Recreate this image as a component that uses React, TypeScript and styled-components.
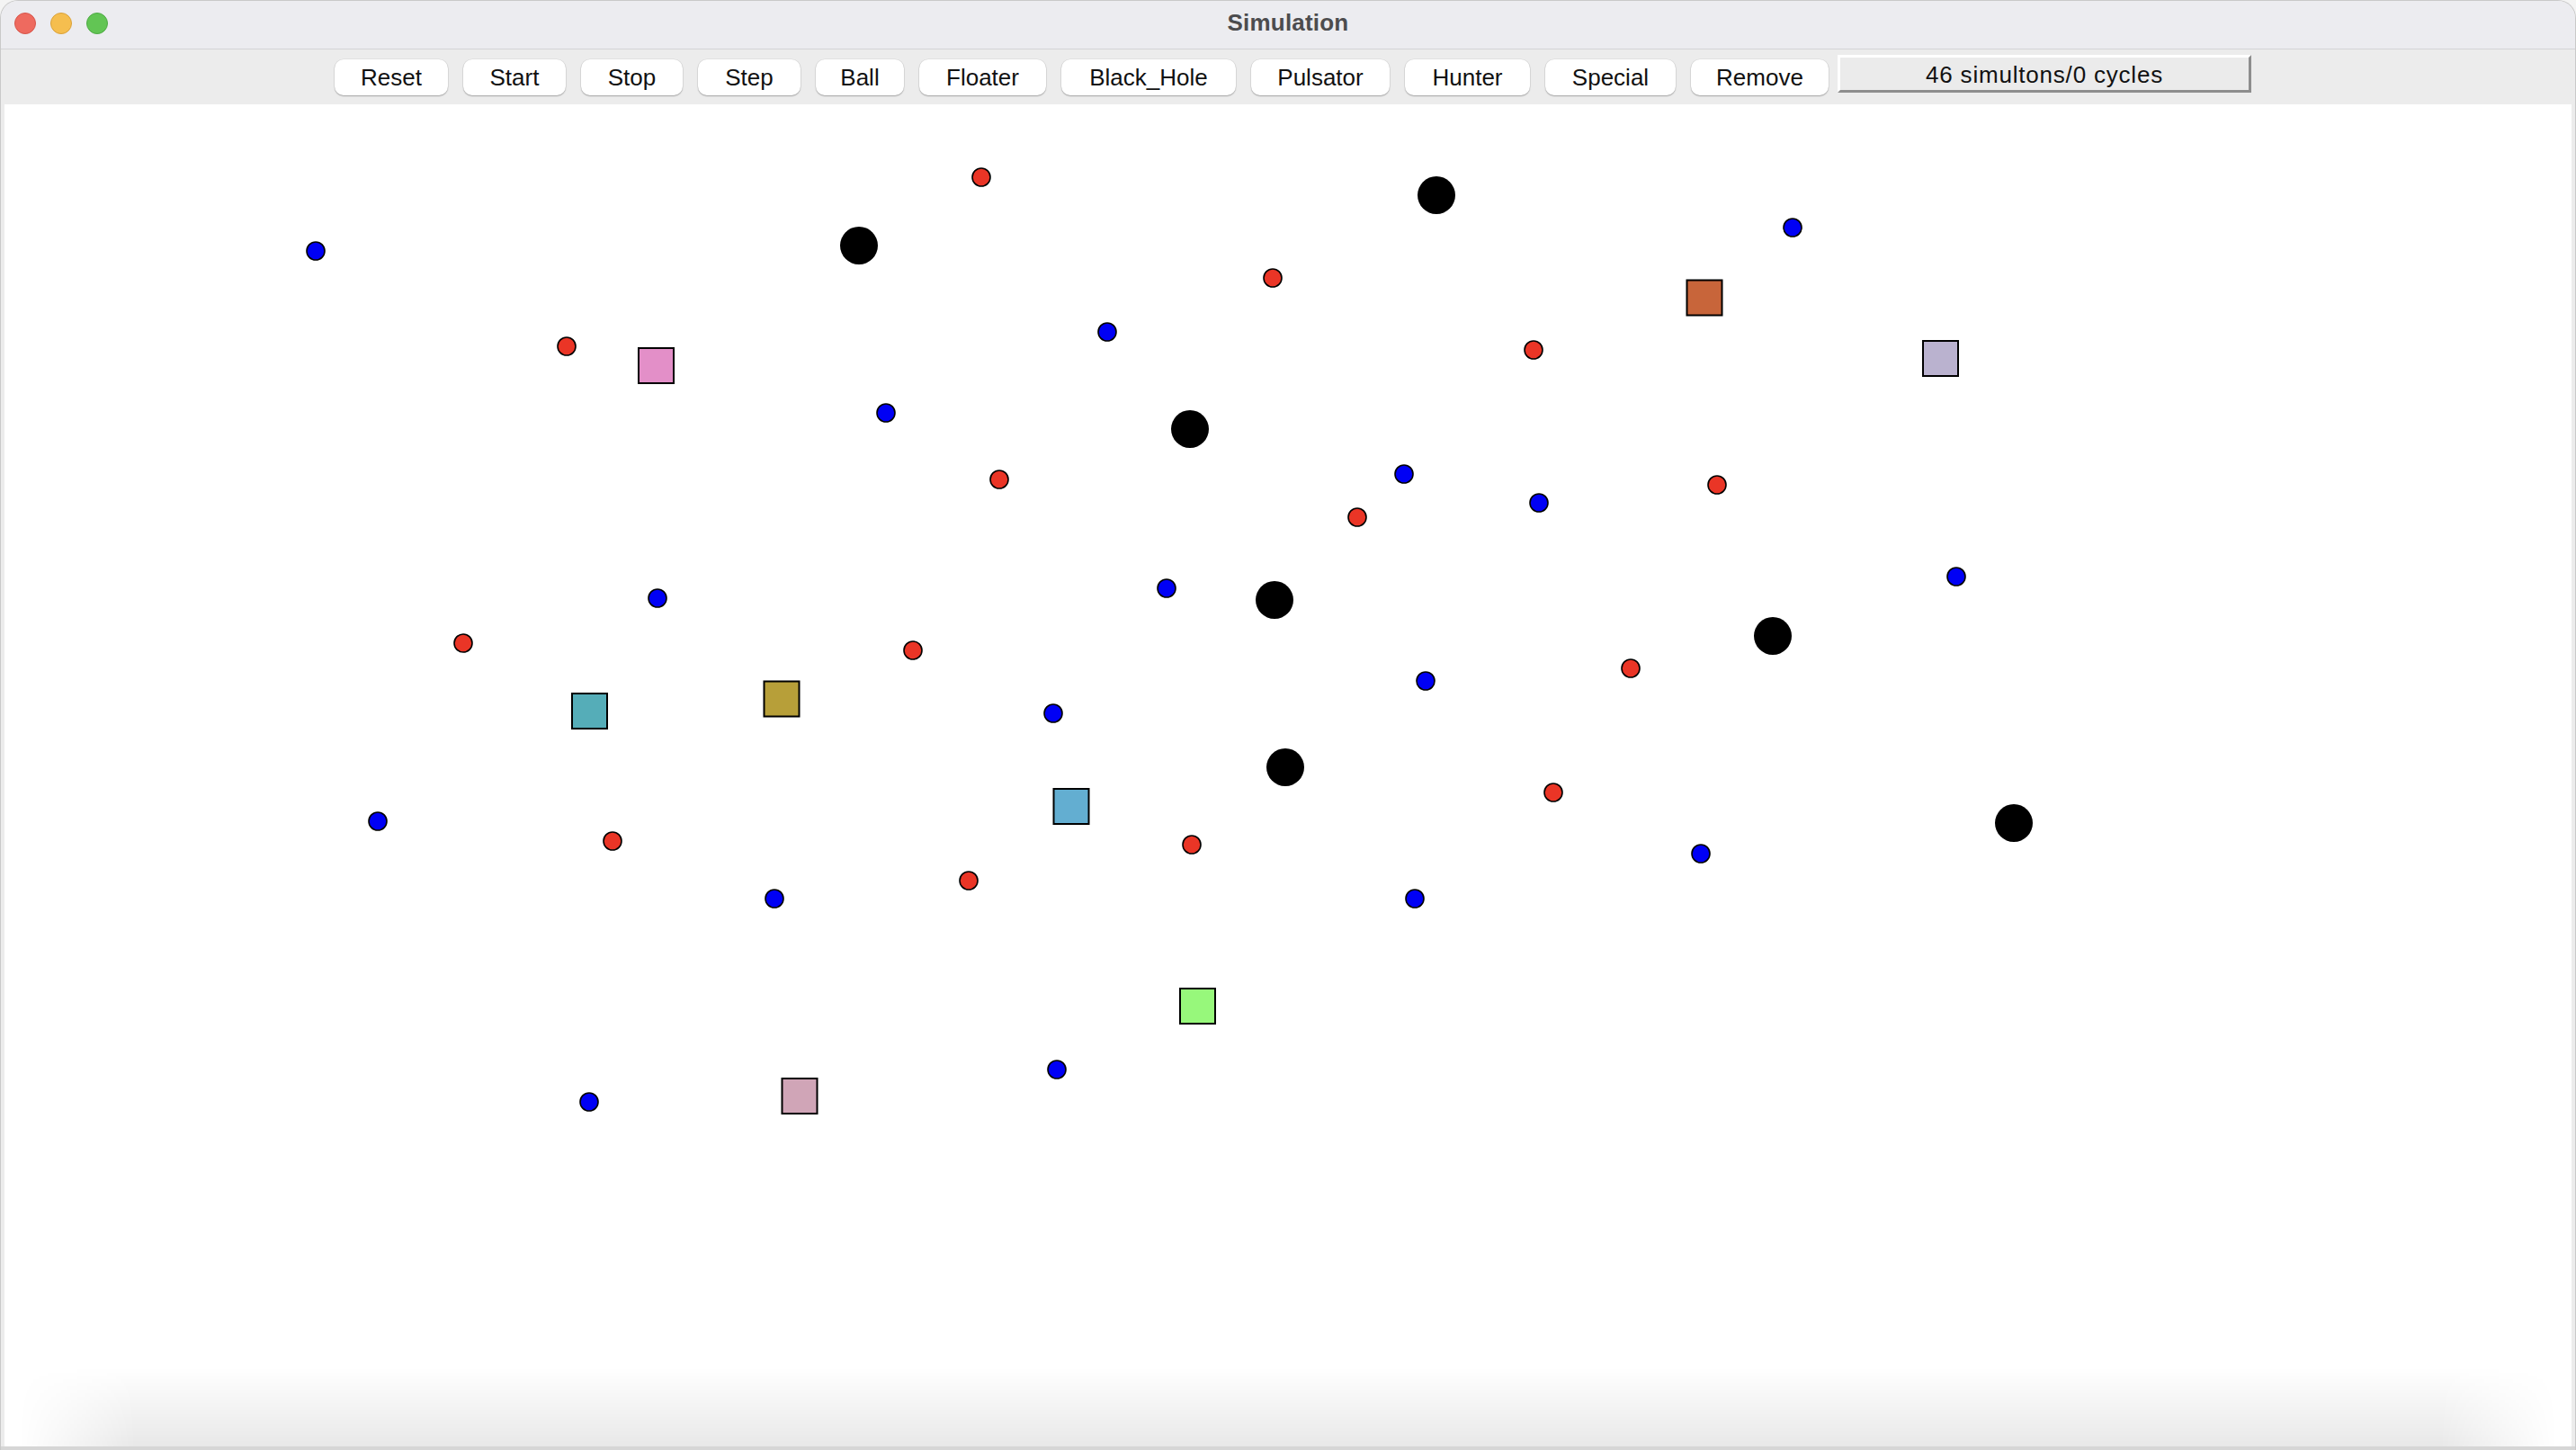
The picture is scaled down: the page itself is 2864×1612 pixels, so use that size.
import React from "react";
import styled, { createGlobalStyle } from "styled-components";

const GlobalStyle = createGlobalStyle`
  html, body { margin: 0; padding: 0; background: #f4f4f4; }
  body { font-family: "Liberation Sans", Arial, Helvetica, sans-serif; }
  #root { width: 2864px; height: 1612px; }
`;

const Window = styled.div`
  position: relative;
  width: 2864px;
  height: 1612px;
  box-sizing: border-box;
  display: flex;
  flex-direction: column;
  background: #ececec;
  border: 1px solid #c9c9c9;
  border-bottom: none;
  border-radius: 20px 20px 0 0;
  overflow: hidden;
`;

const TitleBar = styled.div`
  height: 53px;
  flex: none;
  display: grid;
  grid-template-columns: 1fr auto 1fr;
  align-items: center;
  background: #ececf0;
  border-bottom: 1px solid #d3d3d6;
`;

const Lights = styled.div`
  display: flex;
  gap: 16px;
  padding-left: 15px;
  align-self: start;
  padding-top: 13px;
`;

const Light = styled.span<{ $c: string; $b: string }>`
  width: 24px;
  height: 24px;
  border-radius: 50%;
  box-sizing: border-box;
  background: ${(p) => p.$c};
  border: 1px solid ${(p) => p.$b};
`;

const Title = styled.div`
  font-size: 26px;
  font-weight: 700;
  color: #4c4c4e;
  padding-bottom: 4px;
  letter-spacing: 0.2px;
`;

const Toolbar = styled.div`
  height: 61px;
  flex: none;
  box-sizing: border-box;
  display: flex;
  justify-content: center;
  align-items: flex-start;
  gap: 17px;
  padding: 11px 0 0 11px;
  background: #ececec;
`;

const Button = styled.button<{ $w: number }>`
  width: ${(p) => p.$w}px;
  height: 40px;
  flex: none;
  padding: 0 0 1px;
  border: none;
  border-radius: 10px;
  background: #ffffff;
  box-shadow: 0 1px 1.5px rgba(0, 0, 0, 0.28), 0 0 0 0.5px rgba(0, 0, 0, 0.08);
  font-family: "Liberation Sans", Arial, Helvetica, sans-serif;
  font-size: 26px;
  color: #111111;
  line-height: 38px;
  text-align: center;
`;

const Status = styled.div`
  width: 460px;
  height: 42px;
  flex: none;
  box-sizing: border-box;
  margin-left: -7px;
  margin-top: -5px;
  padding-top: 3px;
  display: flex;
  align-items: center;
  justify-content: center;
  background: #ebebeb;
  border-style: solid;
  border-width: 3px;
  border-color: #ffffff #8d8d8d #8d8d8d #ffffff;
  font-size: 26px;
  letter-spacing: 0.8px;
  color: #111111;
`;

const Body = styled.div`
  flex: 1;
  display: flex;
  padding: 0 4px;
  background: #ececec;
`;

const Canvas = styled.div`
  flex: 1;
  background: #ffffff;
  display: flex;
`;

const Drawing = styled.svg`
  display: block;
  width: 100%;
  height: 100%;
`;

const BottomShade = styled.div`
  position: absolute;
  left: 0;
  right: 0;
  bottom: 4px;
  height: 88px;
  background: linear-gradient(to bottom, rgba(0, 0, 0, 0), rgba(0, 0, 0, 0.09));
  -webkit-mask-image: linear-gradient(to right, transparent 20px, #000 150px, #000 calc(100% - 150px), transparent calc(100% - 20px));
  mask-image: linear-gradient(to right, transparent 20px, #000 150px, #000 calc(100% - 150px), transparent calc(100% - 20px));
  pointer-events: none;
`;

const BottomEdge = styled.div`
  position: absolute;
  left: 0;
  right: 0;
  bottom: 0;
  height: 4px;
  background: #d6d6d6;
`;

const buttons: [string, number][] = [
  ["Reset", 126],
  ["Start", 114],
  ["Stop", 113],
  ["Step", 114],
  ["Ball", 98],
  ["Floater", 141],
  ["Black_Hole", 194],
  ["Pulsator", 154],
  ["Hunter", 139],
  ["Special", 145],
  ["Remove", 153],
];

const blue: [number, number][] = [
  [351, 279], [1231, 369], [985, 459], [731, 665], [1297, 654], [1993, 253],
  [1561, 527], [1711, 559], [2175, 641], [1171, 793], [420, 913], [861, 999],
  [1175, 1189], [655, 1225], [1585, 757], [1891, 949], [1573, 999],
];

const red: [number, number][] = [
  [1091, 197], [630, 385], [1111, 533], [1415, 309], [1705, 389], [1909, 539],
  [1509, 575], [515, 715], [1015, 723], [681, 935], [1077, 979], [1813, 743],
  [1727, 881], [1325, 939],
];

const black: [number, number][] = [
  [955, 273], [1597, 217], [1323, 477], [1417, 667], [1971, 707], [1429, 853], [2239, 915],
];

const squares: [number, number, string][] = [
  [729.5, 406.5, "#e38fc8"],
  [1895, 331, "#c8653a"],
  [2157.5, 398.5, "#bab2cf"],
  [655.5, 790.5, "#55adb8"],
  [869, 777, "#b79f39"],
  [1191, 896.5, "#63aed1"],
  [1331.5, 1118.5, "#97f87b"],
  [889, 1218.5, "#d0a5b7"],
];

export default function App() {
  return (
    <>
      <GlobalStyle />
      <Window>
        <TitleBar>
          <Lights>
            <Light $c="#ee6a5f" $b="#d6544a" />
            <Light $c="#f5be4f" $b="#d9a13a" />
            <Light $c="#62c554" $b="#4ea944" />
          </Lights>
          <Title>Simulation</Title>
          <div />
        </TitleBar>
        <Toolbar>
          {buttons.map(([label, w]) => (
            <Button key={label} $w={w}>
              {label}
            </Button>
          ))}
          <Status>46 simultons/0 cycles</Status>
        </Toolbar>
        <Body>
          <Canvas>
            <Drawing viewBox="5 116 2854 1496" preserveAspectRatio="xMinYMin meet">
              {squares.map(([x, y, c], i) => (
                <rect key={"s" + i} x={x - 19.5} y={y - 19.5} width={39} height={39} fill={c} stroke="#000" strokeWidth={2} />
              ))}
              {black.map(([x, y], i) => (
                <circle key={"k" + i} cx={x} cy={y} r={21} fill="#000" />
              ))}
              {red.map(([x, y], i) => (
                <circle key={"r" + i} cx={x} cy={y} r={10} fill="#ea3526" stroke="#000" strokeWidth={1.6} />
              ))}
              {blue.map(([x, y], i) => (
                <circle key={"b" + i} cx={x} cy={y} r={10} fill="#0000f5" stroke="#000" strokeWidth={1.6} />
              ))}
            </Drawing>
          </Canvas>
        </Body>
        <BottomShade />
        <BottomEdge />
      </Window>
    </>
  );
}
